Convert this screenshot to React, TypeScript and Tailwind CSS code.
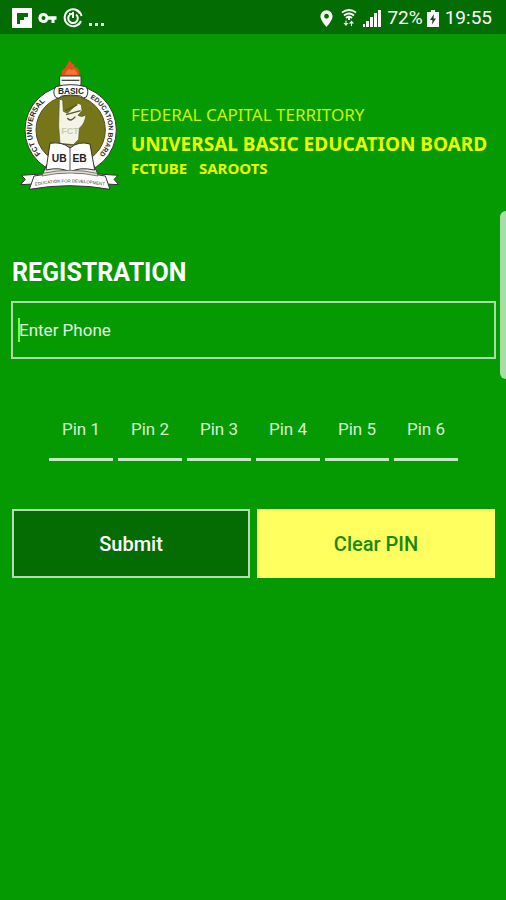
import { useState } from "react";

const PINS = [1, 2, 3, 4, 5, 6];

function Emblem() {
  return (
    <svg
      className="h-[136px] w-[100px] shrink-0"
      viewBox="30 24 300 408"
      role="img"
      aria-label="Universal Basic Education Board emblem"
      fontFamily="Liberation Sans, Arial, sans-serif"
    >
      <defs>
        <path id="arc-left" d="M92 312 A111 111 0 0 1 138 136" />
        <path id="arc-right" d="M240 144 A111 111 0 0 1 250 330" />
        <path id="ribbon" d="M76 407 Q180 387 292 409" />
      </defs>
      <ellipse cx="182" cy="240" rx="137" ry="134" fill="#fff" stroke="#2f3f22" strokeWidth="3" />
      <ellipse cx="182" cy="240" rx="104" ry="103" fill="#77751a" stroke="#4d5218" strokeWidth="3" />
      <g fontWeight="700" fill="#242424">
        <text fontSize="22">
          <textPath href="#arc-left">FCT UNIVERSAL</textPath>
        </text>
        <text fontSize="20">
          <textPath href="#arc-right">EDUCATION BOARD</textPath>
        </text>
      </g>
      {/* torch */}
      <path
        d="M156 78 C152 62 160 58 168 52 C168 46 174 44 176 34 C180 28 184 34 185 42 C190 38 194 42 193 50 C202 50 210 60 208 78 Z"
        fill="#e2511b"
      />
      <path d="M164 74 Q170 60 178 56 Q184 64 192 56 Q200 64 202 74 Z" fill="#f07834" />
      <path d="M149 78 H213 V102 L208 116 H154 L149 102 Z" fill="#fff" stroke="#3e3e30" strokeWidth="3" />
      <path d="M155 91 H208" stroke="#4c4c3c" strokeWidth="4" />
      <path
        d="M138 110 Q182 98 227 110 Q239 122 229 141 Q219 148 212 138 Q182 132 154 138 Q146 149 136 141 Q126 124 138 110 Z"
        fill="#fff"
        stroke="#333"
        strokeWidth="3"
      />
      <text x="183" y="133" fontSize="25" fontWeight="700" textAnchor="middle" fill="#222">
        BASIC
      </text>
      {/* figure reading */}
      <path
        d="M148 148 L158 150 L160 184 L172 190 L204 160 L214 164 L216 182 L204 196 Q216 204 228 194 Q224 224 208 234 L206 268 L190 284 L150 280 L146 228 Z"
        fill="#f4f4e6"
        stroke="#55572b"
        strokeWidth="2"
      />
      <path
        d="M166 182 L202 164 M168 194 L212 182 M172 204 Q182 218 196 200"
        fill="none"
        stroke="#55572b"
        strokeWidth="4"
      />
      <text x="180" y="252" fontSize="27" fontWeight="700" textAnchor="middle" fill="#c9c9a6">
        FCT
      </text>
      <path d="M146 296 Q154 280 180 284 L202 286 L190 298 Z" fill="#96945a" stroke="#44441f" strokeWidth="2" />
      {/* open book */}
      <path d="M110 344 L98 372 H264 L250 344 Z" fill="#e9e9df" stroke="#333" strokeWidth="3" />
      <path
        d="M120 280 Q156 274 180 294 Q206 272 240 282 L254 360 Q208 350 181 366 Q150 350 108 360 Z"
        fill="#fff"
        stroke="#333"
        strokeWidth="3"
      />
      <path d="M180 294 V364" stroke="#555" strokeWidth="3" />
      <g fontSize="31" fontWeight="700" fill="#222" textAnchor="middle">
        <text x="148" y="337">UB</text>
        <text x="209" y="337">EB</text>
      </g>
      {/* motto ribbon */}
      <path d="M94 372 L34 376 L46 388 L32 404 L72 402 Z" fill="#fff" stroke="#333" strokeWidth="3" />
      <path d="M264 372 L324 376 L312 388 L326 404 L286 402 Z" fill="#fff" stroke="#333" strokeWidth="3" />
      <path d="M72 378 Q180 356 286 378 L300 418 Q180 396 58 418 Z" fill="#fff" stroke="#333" strokeWidth="3" />
      <path d="M98 370 Q180 352 262 370 L264 378 Q180 360 96 378 Z" fill="#deded2" stroke="#444" strokeWidth="2" />
      <text fontSize="13" fill="#333">
        <textPath href="#ribbon">EDUCATION FOR DEVELOPMENT</textPath>
      </text>
    </svg>
  );
}

function StatusBar() {
  return (
    <div className="flex h-[34px] items-center justify-between bg-[#036c03] pt-0.5 pr-3.5 pl-3 text-white">
      <div className="flex items-center gap-1.5">
        <svg className="size-5" viewBox="0 0 20 20" fill="#fff">
          <path fillRule="evenodd" d="M0 0H20V20H0Z M5 5V16H8V12H12V9H16V5Z" />
        </svg>
        <svg className="h-3 w-[19px]" viewBox="0 0 18 12" fill="#fff">
          <path
            fillRule="evenodd"
            d="M5 1a5 5 0 1 0 4.600 6.800H13V11h3V7.800h2V4.200H9.600A5 5 0 0 0 5 1Z M5 4a2 2 0 1 1 0 4a2 2 0 0 1 0-4Z"
          />
        </svg>
        <svg className="size-5" viewBox="0 0 20 20" fill="none" stroke="#fff" strokeWidth="2">
          <path d="M18.500 8A8.500 8.500 0 1 0 18 13M13 2A8.500 8.500 0 0 1 17 5.500" />
          <path d="M7 6.500A4.800 4.800 0 1 0 13 6.500M10 4V10M6 6h3" />
        </svg>
        <span className="flex gap-[3px] pt-3">
          <i className="size-[3px] bg-white" />
          <i className="size-[3px] bg-white" />
          <i className="size-[3px] bg-white" />
        </span>
      </div>
      <div className="flex items-center">
        <svg className="mr-2 h-[17px] w-[13px]" viewBox="0 0 14 18" fill="#fff">
          <path
            fillRule="evenodd"
            d="M7 0a6.500 6.500 0 0 0-6.500 6.500C.5 11 7 18 7 18s6.500-7 6.500-11.500A6.500 6.500 0 0 0 7 0Z M7 4a2.600 2.600 0 1 1 0 5.200A2.600 2.600 0 0 1 7 4Z"
          />
        </svg>
        <svg className="mr-1.5 h-[18px] w-4" viewBox="0 0 16 18" fill="none" stroke="#fff" strokeWidth="1.800">
          <path d="M1 3.500Q8-1.500 15 3.500M3 6.500Q8 2.500 13 6.500M5 9Q8 6.500 11 9" />
          <path d="M8 8V11" strokeWidth="2" />
          <path d="M5.500 11.500V14H7.500L5 17L2.500 14H4.500V11.500Z M11 17V14.500H13L10.500 11.500L8 14.500H10V17Z" fill="#fff" stroke="none" />
        </svg>
        <svg className="mr-1.5 h-[18px] w-[18px]" viewBox="0 0 18 18" fill="#fff">
          <path d="M0 15h2v3H0Z M3 12h3v6H3Z M7 8h3v10H7Z M11 4h3v14h-3Z M15 1h3v17h-3Z" />
        </svg>
        <span className="text-[19px]">72%</span>
        <svg className="mr-1.5 ml-1 h-[17px] w-3" viewBox="0 0 12 17">
          <path d="M4 0h4v2h4v15H0V2h4Z" fill="#fff" />
          <path d="M7 4L3 10h2.500L5 14.500L9 8.500H6.500Z" fill="#203a20" />
        </svg>
        <span className="text-[19px]">19:55</span>
      </div>
    </div>
  );
}

export default function App() {
  const [phone, setPhone] = useState("");
  const [pins, setPins] = useState<string[]>(PINS.map(() => ""));

  return (
    <div className="relative min-h-screen bg-[#069a02] font-[Roboto,sans-serif]">
      <StatusBar />

      <header className="flex items-start pt-6 pl-5">
        <Emblem />
        <div className="pt-11 pl-[11px] font-['Noto_Sans','Open_Sans',sans-serif] whitespace-nowrap text-[#e8ff00]">
          <p className="text-[17px] leading-[26px] text-[#c8f500]">FEDERAL CAPITAL TERRITORY</p>
          <h1 className="text-[19px] leading-8 font-bold">UNIVERSAL BASIC EDUCATION BOARD</h1>
          <p className="text-[15px] leading-4 font-bold whitespace-pre">FCTUBE{"   "}SAROOTS</p>
        </div>
      </header>

      <form className="pt-[63px] pr-[10px] pl-[11px]" onSubmit={(e) => e.preventDefault()}>
        <h2 className="pl-px text-[25px] leading-8 font-bold text-white">REGISTRATION</h2>

        <div className="relative mt-3">
          <input
            type="tel"
            aria-label="Enter Phone"
            placeholder="Enter Phone"
            value={phone}
            onChange={(e) => setPhone(e.target.value)}
            className="h-[58px] w-full border-2 border-[#a6dda4] px-1.5 text-[17px] text-white outline-none placeholder:text-[#e2f5e1]"
          />
          <span className="absolute top-[17px] left-[7px] h-6 w-0.5 bg-[#8cff32]" />
        </div>

        <div className="mx-[38px] mt-[50px] grid grid-cols-6 gap-[5px]">
          {PINS.map((pin, i) => (
            <input
              key={pin}
              inputMode="numeric"
              maxLength={1}
              aria-label={`Pin ${pin}`}
              placeholder={`Pin ${pin}`}
              value={pins[i]}
              onChange={(e) => setPins(pins.map((p, n) => (n === i ? e.target.value : p)))}
              className="h-[52px] w-full min-w-0 border-b-[3px] border-[#c4eac2] pb-2.5 text-center text-[17px] text-white outline-none placeholder:text-[#d5f1d3]"
            />
          ))}
        </div>

        <div className="mt-12 grid grid-cols-2 gap-[7px] px-px">
          <button
            type="submit"
            className="h-[69px] border-2 border-[#b5dcb4] bg-[#056b03] text-xl font-medium text-white"
          >
            Submit
          </button>
          <button
            type="button"
            onClick={() => setPins(PINS.map(() => ""))}
            className="h-[69px] bg-[#ffff60] text-xl font-medium text-[#168a08]"
          >
            Clear PIN
          </button>
        </div>
      </form>

      {/* edge panel handle */}
      <div className="absolute top-[211px] right-0 h-[168px] w-1.5 rounded-l-md bg-[#a9dda6]" />
    </div>
  );
}
